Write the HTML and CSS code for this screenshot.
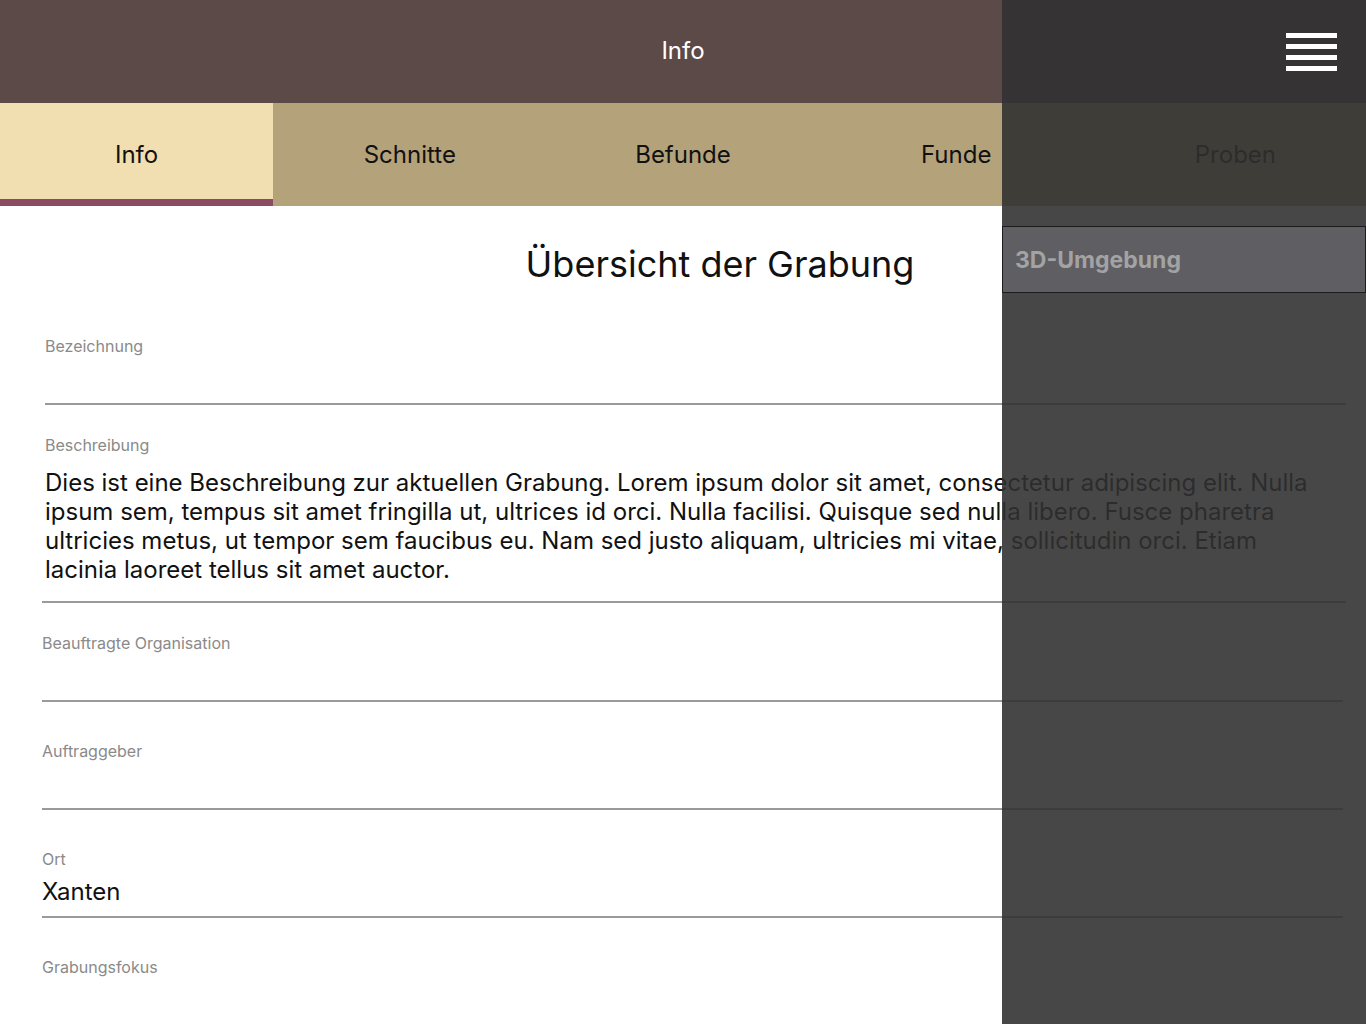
FILE: index.html
```html
<!DOCTYPE html>
<html lang="de">
<head>
<meta charset="utf-8">
<title>Info</title>
<link rel="stylesheet" href="styles.css">
</head>
<body>
<div class="app">
  <header class="topbar">
    <h1 class="topbar-title">Info</h1>
  </header>
  <nav class="tabs">
    <div class="tab tab--active">Info</div>
    <div class="tab">Schnitte</div>
    <div class="tab">Befunde</div>
    <div class="tab">Funde</div>
    <div class="tab tab--last">Proben</div>
  </nav>
  <main class="content">
    <h2 class="page-title">Übersicht der Grabung</h2>
    <div class="field field--first">
      <div class="label">Bezeichnung</div>
      <div class="value"></div>
    </div>
    <div class="field field--desc">
      <div class="label">Beschreibung</div>
      <div class="value value--multi">Dies ist eine Beschreibung zur aktuellen Grabung. Lorem ipsum dolor sit amet, consectetur adipiscing elit. Nulla ipsum sem, tempus sit amet fringilla ut, ultrices id orci. Nulla facilisi. Quisque sed nulla libero. Fusce pharetra ultricies metus, ut tempor sem faucibus eu. Nam sed justo aliquam, ultricies mi vitae, sollicitudin orci. Etiam lacinia laoreet tellus sit amet auctor.</div>
    </div>
    <div class="field field--alt field--close">
      <div class="label">Beauftragte Organisation</div>
      <div class="value"></div>
    </div>
    <div class="field field--alt">
      <div class="label">Auftraggeber</div>
      <div class="value"></div>
    </div>
    <div class="field field--alt">
      <div class="label">Ort</div>
      <div class="value">Xanten</div>
    </div>
    <div class="field field--alt">
      <div class="label">Grabungsfokus</div>
      <div class="value"></div>
    </div>
  </main>
</div>
<aside class="drawer">
  <div class="drawer-head">
    <svg class="burger" width="51" height="39" viewBox="0 0 51 39" aria-hidden="true">
      <rect x="0" y="0" width="51" height="5" fill="#ffffff"/>
      <rect x="0" y="11" width="51" height="5" fill="#ffffff"/>
      <rect x="0" y="22" width="51" height="5" fill="#ffffff"/>
      <rect x="0" y="33" width="51" height="5" fill="#ffffff"/>
    </svg>
  </div>
  <div class="drawer-spacer"></div>
  <div class="drawer-item">3D-Umgebung</div>
</aside>
</body>
</html>
```
FILE: styles.css
```css
html, body {
  margin: 0;
  padding: 0;
}
body {
  font-family: Inter, "Noto Sans", sans-serif;
  background: #ffffff;
  color: #111111;
  height: 1024px;
  overflow: hidden;
}
.app {
  display: flex;
  flex-direction: column;
}
.topbar {
  height: 103px;
  background: #5b4a47;
  display: flex;
  align-items: center;
  justify-content: center;
}
.topbar-title {
  margin: 0;
  font-size: 24px;
  font-weight: 400;
  color: #ffffff;
  line-height: 1;
  padding-bottom: 2px;
}
.tabs {
  display: grid;
  grid-template-columns: repeat(5, 1fr);
  height: 103px;
  background: #b4a27b;
}
.tab {
  display: flex;
  align-items: center;
  justify-content: center;
  font-size: 24px;
  color: #111111;
}
.tab--last {
  padding-left: 12px;
}
.tab--active {
  background: #f1dfb1;
  box-shadow: inset 0 -7px 0 #8b4c63;
}
.content {
  display: flex;
  flex-direction: column;
}
.page-title {
  margin: 36px 0 0 0;
  padding-left: 74px;
  text-align: center;
  font-size: 36px;
  font-weight: 400;
  line-height: 44px;
  color: #111111;
}
.field {
  margin: 31px 20px 0 45px;
  border-bottom: 2px solid #9a9a9a;
}
.field--first {
  margin-top: 51px;
}
.field--desc {
  margin-top: 31px;
  margin-left: 42px;
}
.field--desc .label,
.field--desc .value {
  padding-left: 3px;
}
.field--alt {
  margin: 40px 23px 0 42px;
}
.field--close {
  margin-top: 31px;
}
.label {
  font-size: 16px;
  line-height: 18px;
  color: #8a8a8a;
}
.value {
  font-size: 24px;
  line-height: 29px;
  color: #111111;
  min-height: 29px;
  padding: 9px 0 10px 0;
}
.value--multi {
  padding-top: 14px;
  padding-bottom: 17px;
  padding-right: 22px;
}
.drawer {
  position: fixed;
  top: 0;
  right: 0;
  width: 364px;
  height: 100%;
  background: rgba(48, 48, 48, 0.89);
  display: flex;
  flex-direction: column;
}
.drawer-head {
  height: 103px;
  display: flex;
  align-items: center;
  justify-content: flex-end;
  padding-right: 29px;
}
.burger {
  display: block;
  margin-top: 1px;
}
.drawer-spacer {
  height: 123px;
}
.drawer-item {
  height: 65px;
  border: 1px solid #1c1c1c;
  background: #5f5e63;
  color: #a3a3a3;
  font-size: 23px;
  font-weight: 700;
  display: flex;
  align-items: center;
  padding-left: 12px;
}
```
